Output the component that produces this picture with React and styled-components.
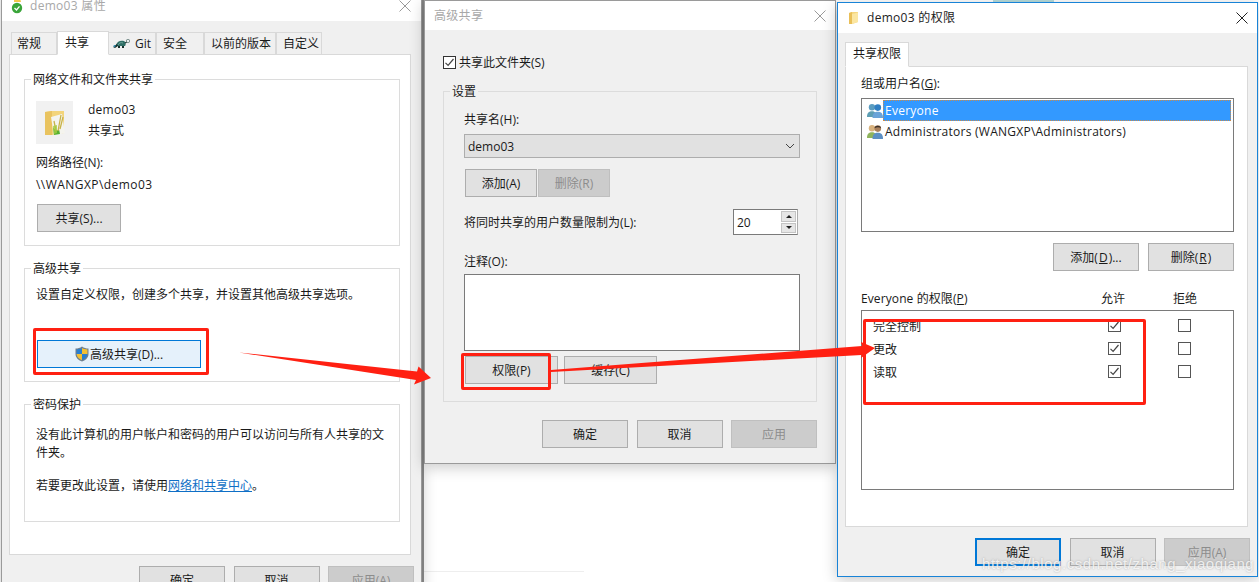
import React from "react";
import styled, { createGlobalStyle } from "styled-components";

const Global = createGlobalStyle`
  html, body { margin: 0; padding: 0; background: #fff; }
  body { width: 1259px; height: 582px; overflow: hidden; font-family: "Open Sans", "Noto Sans CJK SC", sans-serif; font-size: 12px; color: #1a1a1a; }
`;
const Stage = styled.div`position: relative; width: 1259px; height: 582px; overflow: hidden; background: #fff;`;
const Win = styled.section`
  position: absolute; left: ${p => p.$x}px; top: ${p => p.$y}px; width: ${p => p.$w}px; height: ${p => p.$h}px; z-index: 1;
  box-sizing: border-box; display: flex; flex-direction: column; background: #f0f0f0;
  border: 1px solid ${p => p.$active ? "#1883d7" : "#9a9a9a"};
  box-shadow: 0 3px 14px rgba(0,0,0,.22);
`;
const TitleBar = styled.header`
  flex: 0 0 ${p => p.$h}px; box-sizing: border-box; background: #fff; display: flex; align-items: center; gap: ${p => p.$gap ?? 7}px;
  padding: ${p => p.$pad}; color: ${p => p.$active ? "#222" : "#a8a8a8"}; font-size: 12px; line-height: 16px;
`;
const TitleText = styled.span`flex: 1; letter-spacing: .3px;`;
const Close = styled.svg`width: 12px; height: 12px; flex: none; stroke: ${p => p.$active ? "#222" : "#9a9a9a"}; stroke-width: 1; fill: none;`;
const Glyph = styled.svg`flex: none; display: block;`;
const Body = styled.div`flex: 1; display: flex; flex-direction: column; padding: ${p => p.$pad}; min-height: 0;`;
const Tabs = styled.nav`display: flex; height: ${p => p.$h || 22}px; padding-left: ${p => p.$pl || 0}px; align-items: flex-end; position: relative; z-index: 1;`;
const Tab = styled.div`
  box-sizing: border-box; width: ${p => p.$w}px; height: ${p => p.$on ? p.$onH || 24 : 22}px; display: flex; align-items: center; gap: ${p => p.$gap || 0}px;
  padding: ${p => p.$on ? "0 0 3px" : "0 0 1px"} ${p => p.$pl ?? 6}px; background: ${p => p.$on ? "#fff" : "#f0f0f0"};
  border: 1px solid #d9d9d9; border-bottom: ${p => p.$on ? "1px solid #fff" : "none"}; margin-right: ${p => p.$on ? "-1px" : "0"};
  margin-bottom: ${p => p.$on ? "-1px" : "0"}; position: relative; z-index: ${p => p.$on ? 2 : 0};
`;
const Panel = styled.div`
  box-sizing: border-box; background: #fff; border: 1px solid #d9d9d9; height: ${p => p.$h}px; display: flex; flex-direction: column; gap: ${p => p.$gap || 0}px; padding: ${p => p.$pad}; flex: none;
`;
const Group = styled.fieldset`
  margin: ${p => p.$mt || 0}px 0 0; box-sizing: border-box; height: ${p => p.$h}px; border: 1px solid #dcdcdc; padding: 0; min-width: 0; flex: none;
`;
const GroupBody = styled.div`display: flex; flex-direction: column; padding: ${p => p.$pad};`;
const Legend = styled.legend`padding: 2px 2px 0; margin-left: 6px; line-height: 14px; color: #1a1a1a;`;
const Line = styled.div`
  line-height: ${p => p.$lh || 16}px; margin-top: ${p => p.$mt || 0}px; white-space: ${p => p.$wrap ? "normal" : "nowrap"}; flex: none;
  letter-spacing: ${p => p.$ls || 0}px;
`;
const Link = styled.a`color: #0f6fc6; text-decoration: underline;`;
const FileRow = styled.div`display: flex; gap: 15px; align-items: center;`;
const FileMeta = styled.div`display: flex; flex-direction: column; gap: 5px; padding-bottom: 4px;`;
const FileThumb = styled.div`width: 37px; height: 43px; background: #f1f1f1; display: flex; align-items: center; justify-content: center;`;
const Btn = styled.div`
  box-sizing: border-box; flex: none; width: ${p => p.$w || 86}px; height: ${p => p.$h || 28}px; display: flex; align-items: center; justify-content: center; gap: 1px;
  margin-top: ${p => p.$mt || 0}px; margin-left: ${p => p.$ml || 0}px;
  background: ${p => p.$off ? "#cccccc" : p.$hot ? "#e5f1fb" : "#e1e1e1"};
  border: ${p => p.$focus ? "2px solid #0078d7" : p.$hot ? "1px solid #0078d7" : p.$off ? "1px solid #bfbfbf" : "1px solid #adadad"};
  color: ${p => p.$off ? "#8c8c8c" : "#1a1a1a"};
`;
const BtnRow = styled.div`display: flex; gap: ${p => p.$gap ?? 8}px; margin-top: ${p => p.$mt || 0}px; margin-left: ${p => p.$ml || 0}px; justify-content: ${p => p.$end ? "flex-end" : "flex-start"}; flex: none;`;
const CheckRow = styled.label`display: flex; align-items: center; gap: 3px; height: 16px; flex: none;`;
const Box = styled.span`
  box-sizing: border-box; width: 13px; height: 13px; display: inline-flex; align-items: center; justify-content: center; flex: none; background: #fff;
  border: 1px solid ${p => p.$dark ? "#333" : "#555"};
`;
const Select = styled.div`
  box-sizing: border-box; width: 336px; height: 24px; background: #e1e1e1; border: 1px solid #adadad; display: flex; align-items: center; justify-content: space-between; padding: 0 4px 0 3px; margin-top: 6px; flex: none;
`;
const LimitRow = styled.div`display: flex; align-items: center; justify-content: space-between; width: 334px; height: 26px; margin-top: 12px; flex: none;`;
const Spinner = styled.div`box-sizing: border-box; width: 65px; height: 26px; display: flex; border: 1px solid #7a7a7a; border-right: 1px solid #adadad; background: #fff; padding-left: 3px; align-items: center; justify-content: space-between;`;
const SpinBtns = styled.div`display: flex; flex-direction: column; gap: 1px; width: 15px; height: 22px; margin-right: 1px;`;
const SpinBtn = styled.div`flex: 1; background: #e6e6e6; border: 1px solid #c4c4c4; display: flex; align-items: center; justify-content: center; box-sizing: border-box;`;
const Arrow = styled.i`display: block; width: 0; height: 0; border-left: 3px solid transparent; border-right: 3px solid transparent; ${p => p.$up ? "border-bottom: 3px solid #222;" : "border-top: 3px solid #222;"}`;
const TextBox = styled.div`box-sizing: border-box; width: 336px; height: 77px; border: 1px solid #7a7a7a; background: #fff; margin-top: 4px; flex: none;`;
const ListBox = styled.div`box-sizing: border-box; width: 373px; height: ${p => p.$h}px; border: 1px solid #7a7a7a; background: #fff; margin-top: ${p => p.$mt || 0}px; padding: ${p => p.$pad}; flex: none;`;
const ListRow = styled.div`display: flex; align-items: center; height: 21px; padding: 0 1px 0 4px;`;
const RowText = styled.span`
  flex: ${p => p.$sel ? 1 : "none"}; height: 21px; line-height: 21px; padding-left: 2px; box-sizing: border-box; letter-spacing: .25px;
  ${p => p.$sel ? "background: #3399ff; color: #fff; outline: 1px dotted #c98a4a; outline-offset: -1px;" : ""}
`;
const PermHead = styled.div`display: grid; grid-template-columns: 217px 70px 74px; height: 16px; align-items: center; margin-top: 18px; flex: none; letter-spacing: .1px;`;
const Center = styled.span`text-align: center;`;
const PermRow = styled.div`display: grid; grid-template-columns: 206px 70px 70px; height: 23px; align-items: center; padding-left: 11px;`;
const PermCell = styled.span`display: flex; justify-content: center;`;
const U = styled.span`text-decoration: underline; text-underline-offset: 1px;`;
const Highlight = styled.div`
  position: absolute; left: ${p => p.$x}px; top: ${p => p.$y}px; width: ${p => p.$w}px; height: ${p => p.$h}px;
  box-sizing: border-box; border: 3px solid #ff2012; border-radius: 2px; z-index: 5;
`;
const Overlay = styled.svg`position: absolute; left: 0; top: 0; z-index: 6; pointer-events: none;`;
const Mark = styled.div`
  position: absolute; left: 982px; top: 555px; z-index: 7; font-family: "Liberation Sans", sans-serif; font-size: 15px; letter-spacing: 0.55px; line-height: 18px;
  color: rgba(255,255,255,.8); text-shadow: 0 0 2px rgba(110,110,110,.55);
`;
const EdgeStripe = styled.div`position: absolute; left: 422px; top: 0; width: 2px; height: 582px; background: #8f8f8f; z-index: 0;`;
const FaintRule = styled.div`position: absolute; left: 424px; top: 571px; width: 160px; height: 1px; background: #eeeeee; z-index: 0;`;
const TealBit = styled.div`position: absolute; left: 993px; top: 0; width: 61px; height: 2px; background: #b7dcdc; z-index: 0;`;

const CloseIcon = ({ active }) => <Close $active={active} viewBox="0 0 12 12"><path d="M.5.5l11 11M11.5.5l-11 11" /></Close>;
const Tick = () => <svg width="11" height="11" viewBox="0 0 11 11"><path d="M1.5 5.8l2.6 2.6 5.4-6.4" fill="none" stroke="#444" strokeWidth="1.2" /></svg>;
const Check = ({ on, dark }) => <Box $dark={dark}>{on && <Tick />}</Box>;
const Folder = () => (
  <Glyph width="10" height="14" viewBox="0 0 10 14">
    <path d="M0 2 L3 1 L9 1 L9 11 L3 13 L0 13Z" fill="#f5d67e" /><path d="M3 3 L9 1.5 L9 11 L3 13Z" fill="#fbe6a2" /><path d="M0 2L3 1V13H0Z" fill="#e9bf58" />
  </Glyph>
);
const ShareFolder = () => (
  <Glyph width="22" height="28" viewBox="0 0 22 28">
    <path d="M1 3 L8 2 L20 2 L20 24 L8 26 L1 26Z" fill="#f3d47a" /><path d="M1 3 L8 2 V26 L1 26Z" fill="#e9c35f" />
    <path d="M7 8 L18 5 L21 24 L10 27Z" fill="#f4f4ee" /><path d="M9 18 C11 22 14 22 15 20 L16 25 L10 26Z" fill="#55b030" />
    <path d="M10 12 L12 22M17 6 L14 22M19 8 L16 20" stroke="#c9b34b" strokeWidth="1.3" fill="none" /><path d="M9 17 L13 16 L13 24 L10 25Z" fill="#a3cc3e" opacity=".8" />
  </Glyph>
);
const Badge = () => (
  <Glyph width="12" height="16" viewBox="0 0 12 16">
    <path d="M3 0h6l1 4H3z" fill="#f2c64b" /><circle cx="6" cy="10" r="5.2" fill="#3aa53a" /><path d="M3.5 10l2 2 3-3.6" stroke="#fff" strokeWidth="1.3" fill="none" />
  </Glyph>
);
const Turtle = () => (
  <Glyph width="17" height="9" viewBox="0 0 17 9">
    <path d="M3 6 C4 2 8 1 11 2 C13 3 13 6 12 7 H4Z" fill="#2f6f66" />
    <path d="M5 6 C6 4 8 3 10 4" stroke="#7fb0a8" strokeWidth=".8" fill="none" />
    <path d="M0 8l4-3 1 2-3 2zM5 7h2v2H5zM9 7h2v2H9z" fill="#16302c" />
    <path d="M12 4l2-1" stroke="#16302c" strokeWidth="1.2" />
    <circle cx="15" cy="2" r="1.7" fill="#e8eeee" stroke="#55706c" strokeWidth=".7" />
    <circle cx="1.5" cy="7" r="1" fill="#2f8fb5" />
  </Glyph>
);
const Shield = () => (
  <Glyph width="14" height="16" viewBox="0 0 14 16">
    <path d="M7 0.5 C9 2 11 2.5 13.5 2.5 V8 C13.5 12 10 14.5 7 15.5 C4 14.5 .5 12 .5 8 V2.5 C3 2.5 5 2 7 .5Z" fill="#6f7f8f" />
    <path d="M7 2 V8 H1.6 V3.5 C3.5 3.4 5.5 3 7 2Z" fill="#2a7fd0" /><path d="M7 2 C8.5 3 10.5 3.4 12.4 3.5 V8 H7Z" fill="#f4c033" />
    <path d="M1.6 8 H7 V14.2 C4.5 13.2 1.8 11.2 1.6 8Z" fill="#f4c033" /><path d="M7 8 H12.4 C12.2 11.2 9.5 13.2 7 14.2Z" fill="#2a7fd0" />
  </Glyph>
);
const Users = ({ a, b, c, d, hair }) => (
  <Glyph width="16" height="15" viewBox="0 0 16 15">
    <circle cx="5" cy="4.2" r="3.2" fill={a} /><path d="M0 14 C0 9.5 2 8.2 5 8.2 C8 8.2 9 9.5 9 14Z" fill={b} />
    <circle cx="10.8" cy="4.6" r="3.3" fill={c} />
    {hair && <path d="M7.5 4.2 C8 1 13.5 1 14.1 4.2 C12 3 10 3 7.5 4.2Z" fill={hair} />}
    <path d="M5.5 15 C5.5 10.3 7.5 8.8 10.8 8.8 C14 8.8 16 10.3 16 15Z" fill={d} />
  </Glyph>
);
const Perm = ({ label }) => (
  <PermRow>
    <span>{label}</span>
    <PermCell><Check on /></PermCell>
    <PermCell><Check /></PermCell>
  </PermRow>
);

export default function App() {
  return (
    <Stage>
      <Global />
      <EdgeStripe />
      <FaintRule />
      <TealBit />
      <Win $x={1} $y={-10} $w={421} $h={620}>
        <TitleBar $h={30} $pad="0 10px 1px 9px"><Badge /><TitleText>demo03 属性</TitleText><CloseIcon /></TitleBar>
        <Body $pad="11px 10px 0 7px">
          <Tabs $pl={2}>
            <Tab $w={46} $pl={5}>常规</Tab>
            <Tab $w={52} $on $pl={7}>共享</Tab>
            <Tab $w={48} $pl={4} $gap={5}><Turtle />Git</Tab>
            <Tab $w={48}>安全</Tab>
            <Tab $w={72}>以前的版本</Tab>
            <Tab $w={46}>自定义</Tab>
          </Tabs>
          <Panel $h={501} $gap={14} $pad="16px 10px 0 14px">
            <Group $h={175}>
              <Legend>网络文件和文件夹共享</Legend>
              <GroupBody $pad="14px 0 0 11px">
                <FileRow><FileThumb><ShareFolder /></FileThumb><FileMeta><Line $ls={.25}>demo03</Line><Line>共享式</Line></FileMeta></FileRow>
                <Line $mt={11}>网络路径(N):</Line>
                <Line $mt={6} $ls={.45}>\\WANGXP\demo03</Line>
                <Btn $w={84} $mt={11} $ml={1}>共享(S)...</Btn>
              </GroupBody>
            </Group>
            <Group $h={122}>
              <Legend>高级共享</Legend>
              <GroupBody $pad="11px 0 0 11px">
                <Line>设置自定义权限，创建多个共享，并设置其他高级共享选项。</Line>
                <Btn $hot $w={164} $mt={37} $ml={1}><Shield />高级共享(D)...</Btn>
              </GroupBody>
            </Group>
            <Group $h={126}>
              <Legend>密码保护</Legend>
              <GroupBody $pad="14px 6px 0 11px">
                <Line $wrap $lh={17.5}>没有此计算机的用户帐户和密码的用户可以访问与所有人共享的文件夹。</Line>
                <Line $mt={17}>若要更改此设置，请使用<Link>网络和共享中心</Link>。</Line>
              </GroupBody>
            </Group>
          </Panel>
          <BtnRow $gap={8.5} $mt={11} $ml={130}>
            <Btn>确定</Btn><Btn>取消</Btn><Btn $off>应用(A)</Btn>
          </BtnRow>
        </Body>
      </Win>

      <Win $x={424} $y={0} $w={412} $h={464}>
        <TitleBar $h={29} $pad="0 9px 0 9px"><TitleText>高级共享</TitleText><CloseIcon /></TitleBar>
        <Body $pad="24px 18px 0 18px">
          <CheckRow><Check on dark />共享此文件夹(S)</CheckRow>
          <Group $h={319} $mt={13}>
            <Legend>设置</Legend>
            <GroupBody $pad="13px 0 0 20px">
              <Line>共享名(H):</Line>
              <Select><span>demo03</span><svg width="10" height="6" viewBox="0 0 10 6"><path d="M1 1l4 4 4-4" fill="none" stroke="#444" /></svg></Select>
              <BtnRow $gap={1} $mt={11} $ml={1}>
                <Btn $w={72}>添加(A)</Btn><Btn $w={72} $off>删除(R)</Btn>
              </BtnRow>
              <LimitRow>
                <span>将同时共享的用户数量限制为(L):</span>
                <Spinner><span>20</span><SpinBtns><SpinBtn><Arrow $up /></SpinBtn><SpinBtn><Arrow /></SpinBtn></SpinBtns></Spinner>
              </LimitRow>
              <Line $mt={19}>注释(O):</Line>
              <TextBox />
              <BtnRow $gap={6} $mt={5} $ml={1}>
                <Btn $w={93}>权限(P)</Btn><Btn $w={93}>缓存(C)</Btn>
              </BtnRow>
            </GroupBody>
          </Group>
          <BtnRow $gap={8.5} $mt={18} $ml={99}>
            <Btn>确定</Btn><Btn>取消</Btn><Btn $off>应用</Btn>
          </BtnRow>
        </Body>
      </Win>

      <Win $x={837} $y={2} $w={421} $h={575} $active>
        <TitleBar $h={30} $active $gap={8} $pad="0 9px 0 11px"><Folder /><TitleText>demo03 的权限</TitleText><CloseIcon active /></TitleBar>
        <Body $pad="9px 9px 0 7px">
          <Tabs $h={24}>
            <Tab $w={64} $on $onH={25} $pl={7}>共享权限</Tab>
          </Tabs>
          <Panel $h={461} $pad="9px 13px 0 15px">
            <Line>组或用户名(<U>G</U>):</Line>
            <ListBox $h={134} $mt={6} $pad="1px">
              <ListRow><Users a="#5a9cc0" b="#5d9eb4" c="#2f7ec2" d="#6aa3d8" /><RowText $sel>Everyone</RowText></ListRow>
              <ListRow><Users a="#d8b27e" b="#8fb35c" c="#a9805c" d="#5c8fc4" hair="#3a302a" /><RowText>Administrators (WANGXP\Administrators)</RowText></ListRow>
            </ListBox>
            <BtnRow $gap={9} $mt={11} $end>
              <Btn>添加(<U>D</U>)...</Btn><Btn>删除(<U>R</U>)</Btn>
            </BtnRow>
            <PermHead><span>Everyone 的权限(<U>P</U>)</span><Center>允许</Center><Center>拒绝</Center></PermHead>
            <ListBox $h={180} $mt={5} $pad="3px 0 0 0">
              <Perm label="完全控制" /><Perm label="更改" /><Perm label="读取" />
            </ListBox>
          </Panel>
          <BtnRow $gap={8.5} $mt={11} $ml={130}>
            <Btn $focus>确定</Btn><Btn>取消</Btn><Btn $off>应用(A)</Btn>
          </BtnRow>
        </Body>
      </Win>

      <Highlight $x={33} $y={328} $w={176} $h={47} />
      <Highlight $x={461} $y={353} $w={90} $h={37} />
      <Highlight $x={863} $y={319} $w={283} $h={86} />
      <Overlay width="1259" height="582" viewBox="0 0 1259 582">
        <path d="M239 352.5 L417 371.5 L418.5 366.5 L431 378 L414 384.5 L416 380Z" fill="#ff2012" />
        <path d="M551 370 L862 346 L861 342 L875 348 L861 358 L861.5 355 L551 372Z" fill="#ff2012" />
      </Overlay>
      <Mark>https://blog.csdn.net/zhang_xiaoqiang</Mark>
    </Stage>
  );
}
